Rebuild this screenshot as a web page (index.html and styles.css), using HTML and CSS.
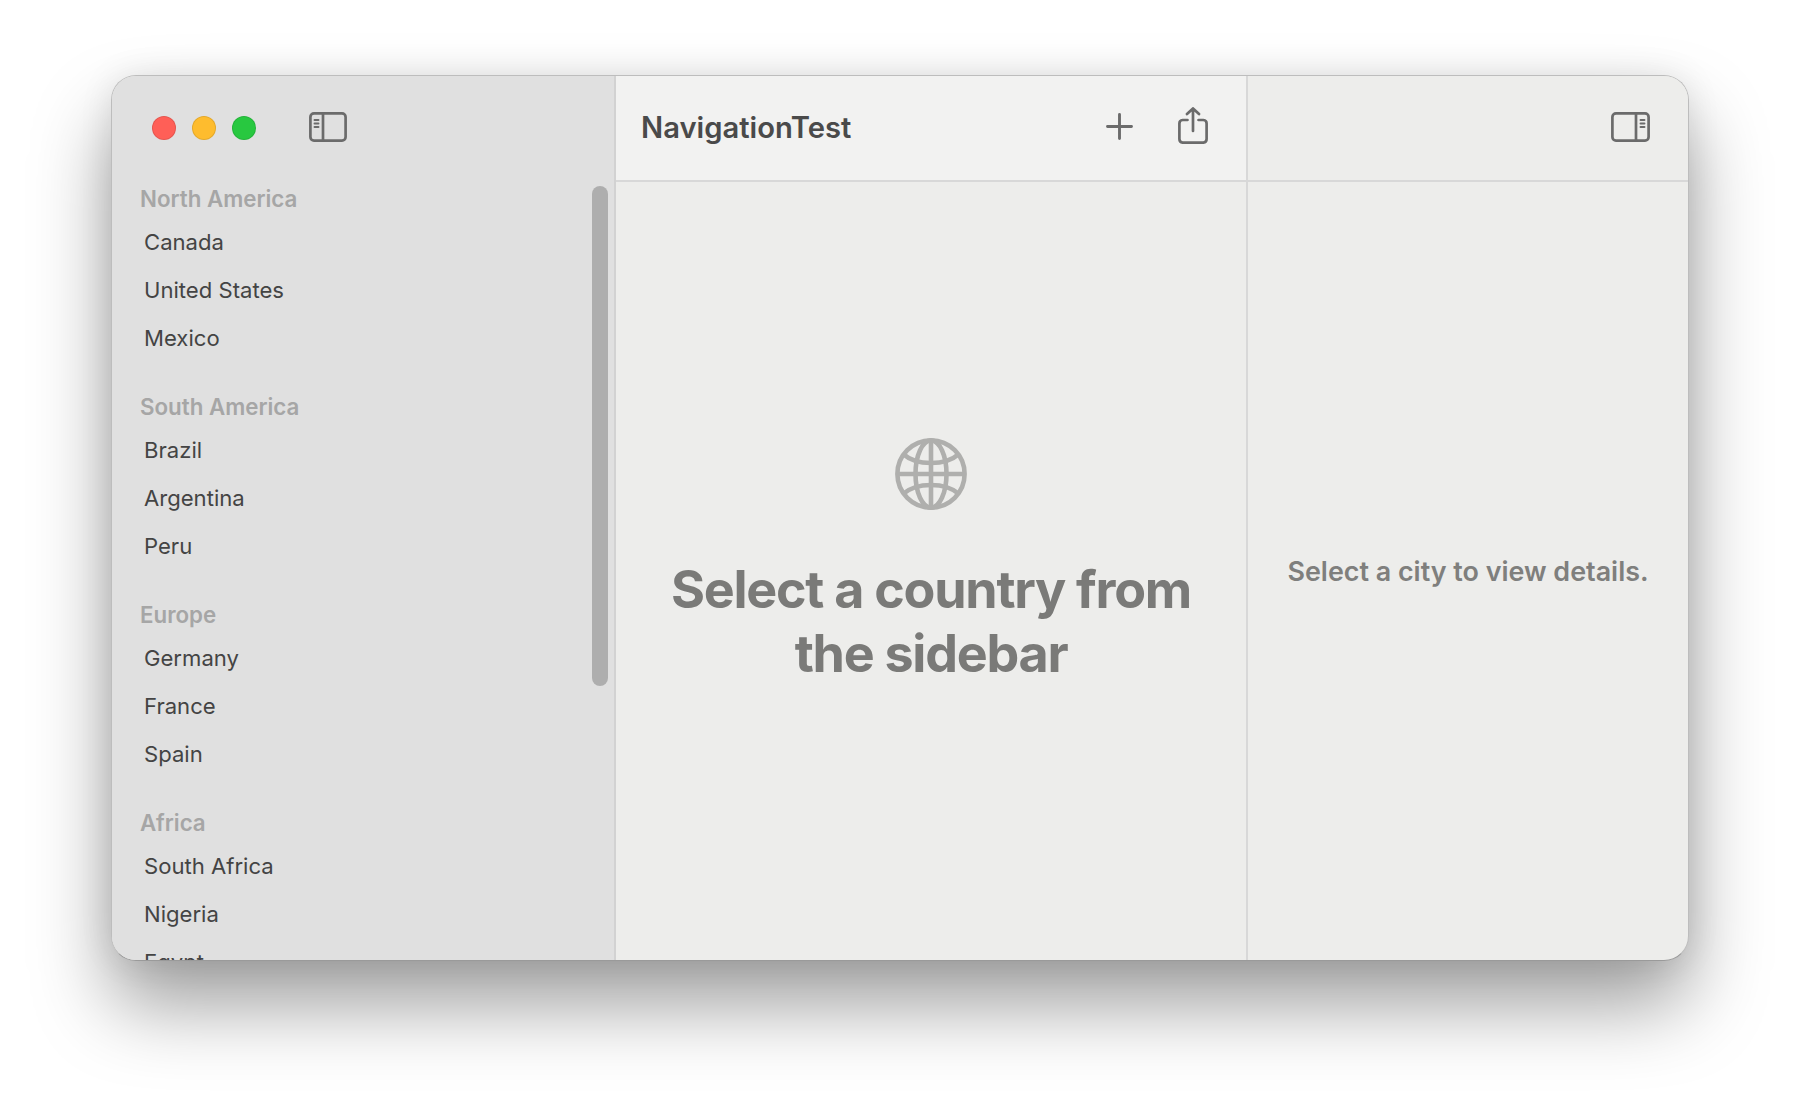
FILE: index.html
```html
<!DOCTYPE html>
<html lang="en">
<head>
  <meta charset="UTF-8" />
  <title>NavigationTest</title>
  <link rel="stylesheet" href="styles.css">
</head>
<body>
  <div class="window">
    <aside class="sidebar">
      <div class="sidebar-bar">
        <span class="light red"></span>
        <span class="light yellow"></span>
        <span class="light green"></span>
        <svg class="panel-icon left-toggle" viewBox="0 0 38 30" fill="none" stroke="#6b6b6b" stroke-width="2.7" stroke-linecap="round">
          <rect x="1.4" y="1.4" width="35.2" height="27.2" rx="3.6"/>
          <path d="M14 1.4V28.6"/>
          <path d="M5.5 8H9.5M5.5 11.5H9.5M5.5 15H9.5" stroke-width="1.9"/>
        </svg>
      </div>
      <div class="list">
        <section class="group">
          <h3>North America</h3>
          <div class="row">Canada</div>
          <div class="row">United States</div>
          <div class="row">Mexico</div>
        </section>
        <section class="group">
          <h3>South America</h3>
          <div class="row">Brazil</div>
          <div class="row">Argentina</div>
          <div class="row">Peru</div>
        </section>
        <section class="group">
          <h3>Europe</h3>
          <div class="row">Germany</div>
          <div class="row">France</div>
          <div class="row">Spain</div>
        </section>
        <section class="group">
          <h3>Africa</h3>
          <div class="row">South Africa</div>
          <div class="row">Nigeria</div>
          <div class="row">Egypt</div>
        </section>
      </div>
      <div class="scroll-thumb"></div>
    </aside>

    <main class="content">
      <header class="toolbar">
        <h1>NavigationTest</h1>
        <svg class="add-icon" viewBox="0 0 27 27" fill="none" stroke="#6b6b6b" stroke-width="2.9" stroke-linecap="round">
          <path d="M13.5 1.5V25.5M1.5 13.5H25.5"/>
        </svg>
        <svg class="share-icon" viewBox="0 0 30 37" fill="none" stroke="#6b6b6b" stroke-width="2.7" stroke-linecap="round" stroke-linejoin="round">
          <path d="M9.5 13H4.6A3.5 3.5 0 0 0 1.4 16.5V32.1A3.5 3.5 0 0 0 4.6 35.6H25.4A3.5 3.5 0 0 0 28.6 32.1V16.5A3.5 3.5 0 0 0 25.4 13H20.5"/>
          <path d="M15 24V1.6M9 7L15 1.4L21 7"/>
        </svg>
      </header>
      <div class="empty">
        <svg class="globe" viewBox="0 0 72 72" fill="none" stroke="#afafad" stroke-width="4.6">
          <circle cx="36" cy="36" r="33.6"/>
          <ellipse cx="36" cy="36" rx="15.5" ry="33.6"/>
          <path d="M36 2V70M2 36H70"/>
          <path d="M8 16C16 23 25 25 36 25S56 23 64 16"/>
          <path d="M8 56C16 49 25 47 36 47S56 49 64 56"/>
        </svg>
        <p class="empty-title">Select a country from<br>the sidebar</p>
      </div>
    </main>

    <section class="detail">
      <header class="toolbar detail-bar">
        <svg class="panel-icon wide" viewBox="0 0 39 30" fill="none" stroke="#6b6b6b" stroke-width="2.7" stroke-linecap="round">
          <rect x="1.4" y="1.4" width="36.2" height="27.2" rx="3.6"/>
          <path d="M25 1.4V28.6"/>
          <path d="M29.5 8H33.5M29.5 11.5H33.5M29.5 15H33.5" stroke-width="1.9"/>
        </svg>
      </header>
      <div class="detail-body">Select a city to view details.</div>
    </section>
  </div>
</body>
</html>
```

FILE: styles.css
```css
* { box-sizing: border-box; }

html, body { height: 100%; }

body {
  margin: 0;
  padding: 75px 0 0 111px;
  background: #fff;
  font-family: Inter, "Liberation Sans", sans-serif;
  overflow: hidden;
}

.window {
  width: 1578px;
  height: 886px;
  display: grid;
  grid-template-columns: 504px 632px 1fr;
  background: #ededeb;
  border: 1px solid #bdbdbd;
  border-bottom-color: #9a9a9a;
  border-radius: 25px;
  overflow: hidden;
  box-shadow: 0 44px 78px rgba(0, 0, 0, 0.38), 0 0 34px rgba(0, 0, 0, 0.09);
}

/* sidebar */
.sidebar {
  position: relative;
  display: flex;
  flex-direction: column;
  height: 884px;
  background: #e0e0e0;
  border-right: 2px solid #d2d2d2;
  overflow: hidden;
}

.sidebar-bar {
  height: 105px;
  flex: none;
  display: flex;
  align-items: center;
  gap: 16px;
  padding: 0 0 2px 40px;
}

.light {
  width: 24px;
  height: 24px;
  border-radius: 50%;
  border: 1px solid rgba(0, 0, 0, 0.1);
}
.red { background: #ff5f57; }
.yellow { background: #febc2e; }
.green { background: #28c840; }

.panel-icon {
  width: 38px;
  height: 30px;
  flex: none;
}
.panel-icon.wide { width: 39px; }
.left-toggle { margin-left: 37px; margin-top: -2px; }

.list {
  flex: 1;
  padding: 0 0 0 28px;
  overflow: hidden;
}

.group { margin-bottom: 27px; }

.group h3 {
  margin: 0;
  height: 37px;
  line-height: 36px;
  font-size: 22.3px;
  font-weight: 600;
  color: #a6a6a6;
}

.row {
  height: 48px;
  line-height: 48px;
  padding-left: 4px;
  font-size: 22.1px;
  color: #444;
}

.scroll-thumb {
  position: absolute;
  top: 110px;
  left: 480px;
  width: 16px;
  height: 500px;
  border-radius: 8px;
  background: #aeaeae;
}

/* middle column */
.content {
  display: flex;
  flex-direction: column;
  border-right: 2px solid #d8d8d8;
  height: 884px;
}

.toolbar {
  height: 106px;
  flex: none;
  display: flex;
  align-items: center;
  background: #f2f2f1;
  border-bottom: 2px solid #d8d8d8;
  padding: 0 38px 3px 25px;
}

.toolbar h1 {
  flex: 1;
  margin: 2px 0 0;
  font-size: 29.2px;
  font-weight: 600;
  color: #4a4a4a;
}

.add-icon { width: 27px; height: 27px; margin-right: 45px; }
.share-icon { width: 30px; height: 37px; margin-top: -2px; }

.empty {
  flex: 1;
  display: flex;
  flex-direction: column;
  align-items: center;
  justify-content: center;
  padding-bottom: 18px;
}

.globe { width: 72px; height: 72px; }

.empty-title {
  margin: 48px 0 0;
  text-align: center;
  font-size: 52px;
  line-height: 64px;
  font-weight: 700;
  letter-spacing: -1.25px;
  color: #7a7a78;
}

/* detail column */
.detail {
  display: flex;
  flex-direction: column;
  height: 884px;
}

.detail-bar {
  background: #ededeb;
  justify-content: flex-end;
}

.detail-body {
  flex: 1;
  display: flex;
  align-items: center;
  justify-content: center;
  font-size: 26.9px;
  font-weight: 600;
  color: #7f7f7d;
}
```
